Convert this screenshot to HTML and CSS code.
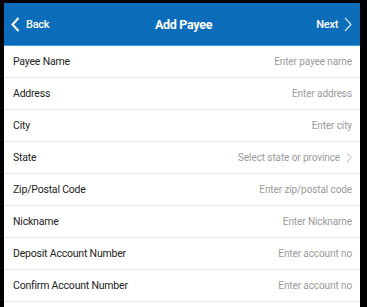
FILE: index.html
```html
<!DOCTYPE html>
<html lang="en">
<head>
    <meta charset="UTF-8">
    <meta name="viewport" content="width=device-width, initial-scale=1.0">
    <title>Add Payee</title>
    <link rel="stylesheet" href="styles.css">
</head>
<body>
    <div class="screen">
        <!-- Top bar -->
        <header class="top-bar">
            <a class="nav-back" href="#">
                <svg width="9" height="15" viewBox="0 0 9 15"><path d="M7.5 1 L1.5 7.5 L7.5 14" fill="none" stroke="#fff" stroke-width="2"/></svg>
                Back
            </a>
            <div class="title">Add Payee</div>
            <a class="nav-next" href="#">
                Next
                <svg width="8" height="15" viewBox="0 0 8 15"><path d="M1 1 L7 7.5 L1 14" fill="none" stroke="#cfe3f5" stroke-width="1.2"/></svg>
            </a>
        </header>

        <!-- Form rows -->
        <div class="form">
            <div class="row"><span class="label">Payee Name</span><span class="hint">Enter payee name</span></div>
            <div class="row"><span class="label">Address</span><span class="hint">Enter address</span></div>
            <div class="row"><span class="label">City</span><span class="hint">Enter city</span></div>
            <div class="row"><span class="label">State</span><span class="hint">Select state or province
                <svg width="6" height="11" viewBox="0 0 6 11"><path d="M1 1 L5 5.5 L1 10" fill="none" stroke="#b5b5b5" stroke-width="1"/></svg></span></div>
            <div class="row"><span class="label">Zip/Postal Code</span><span class="hint">Enter zip/postal code</span></div>
            <div class="row"><span class="label">Nickname</span><span class="hint">Enter Nickname</span></div>
            <div class="row"><span class="label">Deposit Account Number</span><span class="hint">Enter account no</span></div>
            <div class="row"><span class="label">Confirm Account Number</span><span class="hint">Enter account no</span></div>
        </div>
    </div>
</body>
</html>
```

FILE: styles.css
```css
html, body {
    margin: 0;
    padding: 0;
    background-color: #000;
    height: 100%;
}
body {
    font-family: Roboto, "Noto Sans", Arial, sans-serif;
    padding: 3px 7px 0 4px;
    box-sizing: border-box;
    overflow: hidden;
}
.screen {
    background-color: #fff;
    height: 100%;
}
/* Top bar */
.top-bar {
    height: 42px;
    background-color: #0b6dba;
    border-bottom: 1px solid #4a98d6;
    display: flex;
    align-items: center;
    justify-content: space-between;
    padding: 0 8px 0 7px;
    color: #fff;
}
.top-bar a {
    color: #fff;
    text-decoration: none;
    font-size: 11px;
    font-weight: 500;
    letter-spacing: -0.3px;
    display: flex;
    align-items: center;
    gap: 6px;
    width: 60px;
}
.nav-next {
    justify-content: flex-end;
}
.title {
    font-size: 12.5px;
    font-weight: bold;
    letter-spacing: -0.3px;
    margin-left: 4px;
}
/* Form rows */
.row {
    height: 32px;
    border-bottom: 1px solid #e8e8e8;
    display: flex;
    align-items: center;
    justify-content: space-between;
    padding: 0 8px 0 9px;
    box-sizing: border-box;
}
.label {
    font-size: 10.5px;
    letter-spacing: -0.2px;
    color: #222;
}
.hint {
    font-size: 10px;
    letter-spacing: -0.1px;
    color: #9a9a9a;
    display: flex;
    align-items: center;
    gap: 6px;
}
```
